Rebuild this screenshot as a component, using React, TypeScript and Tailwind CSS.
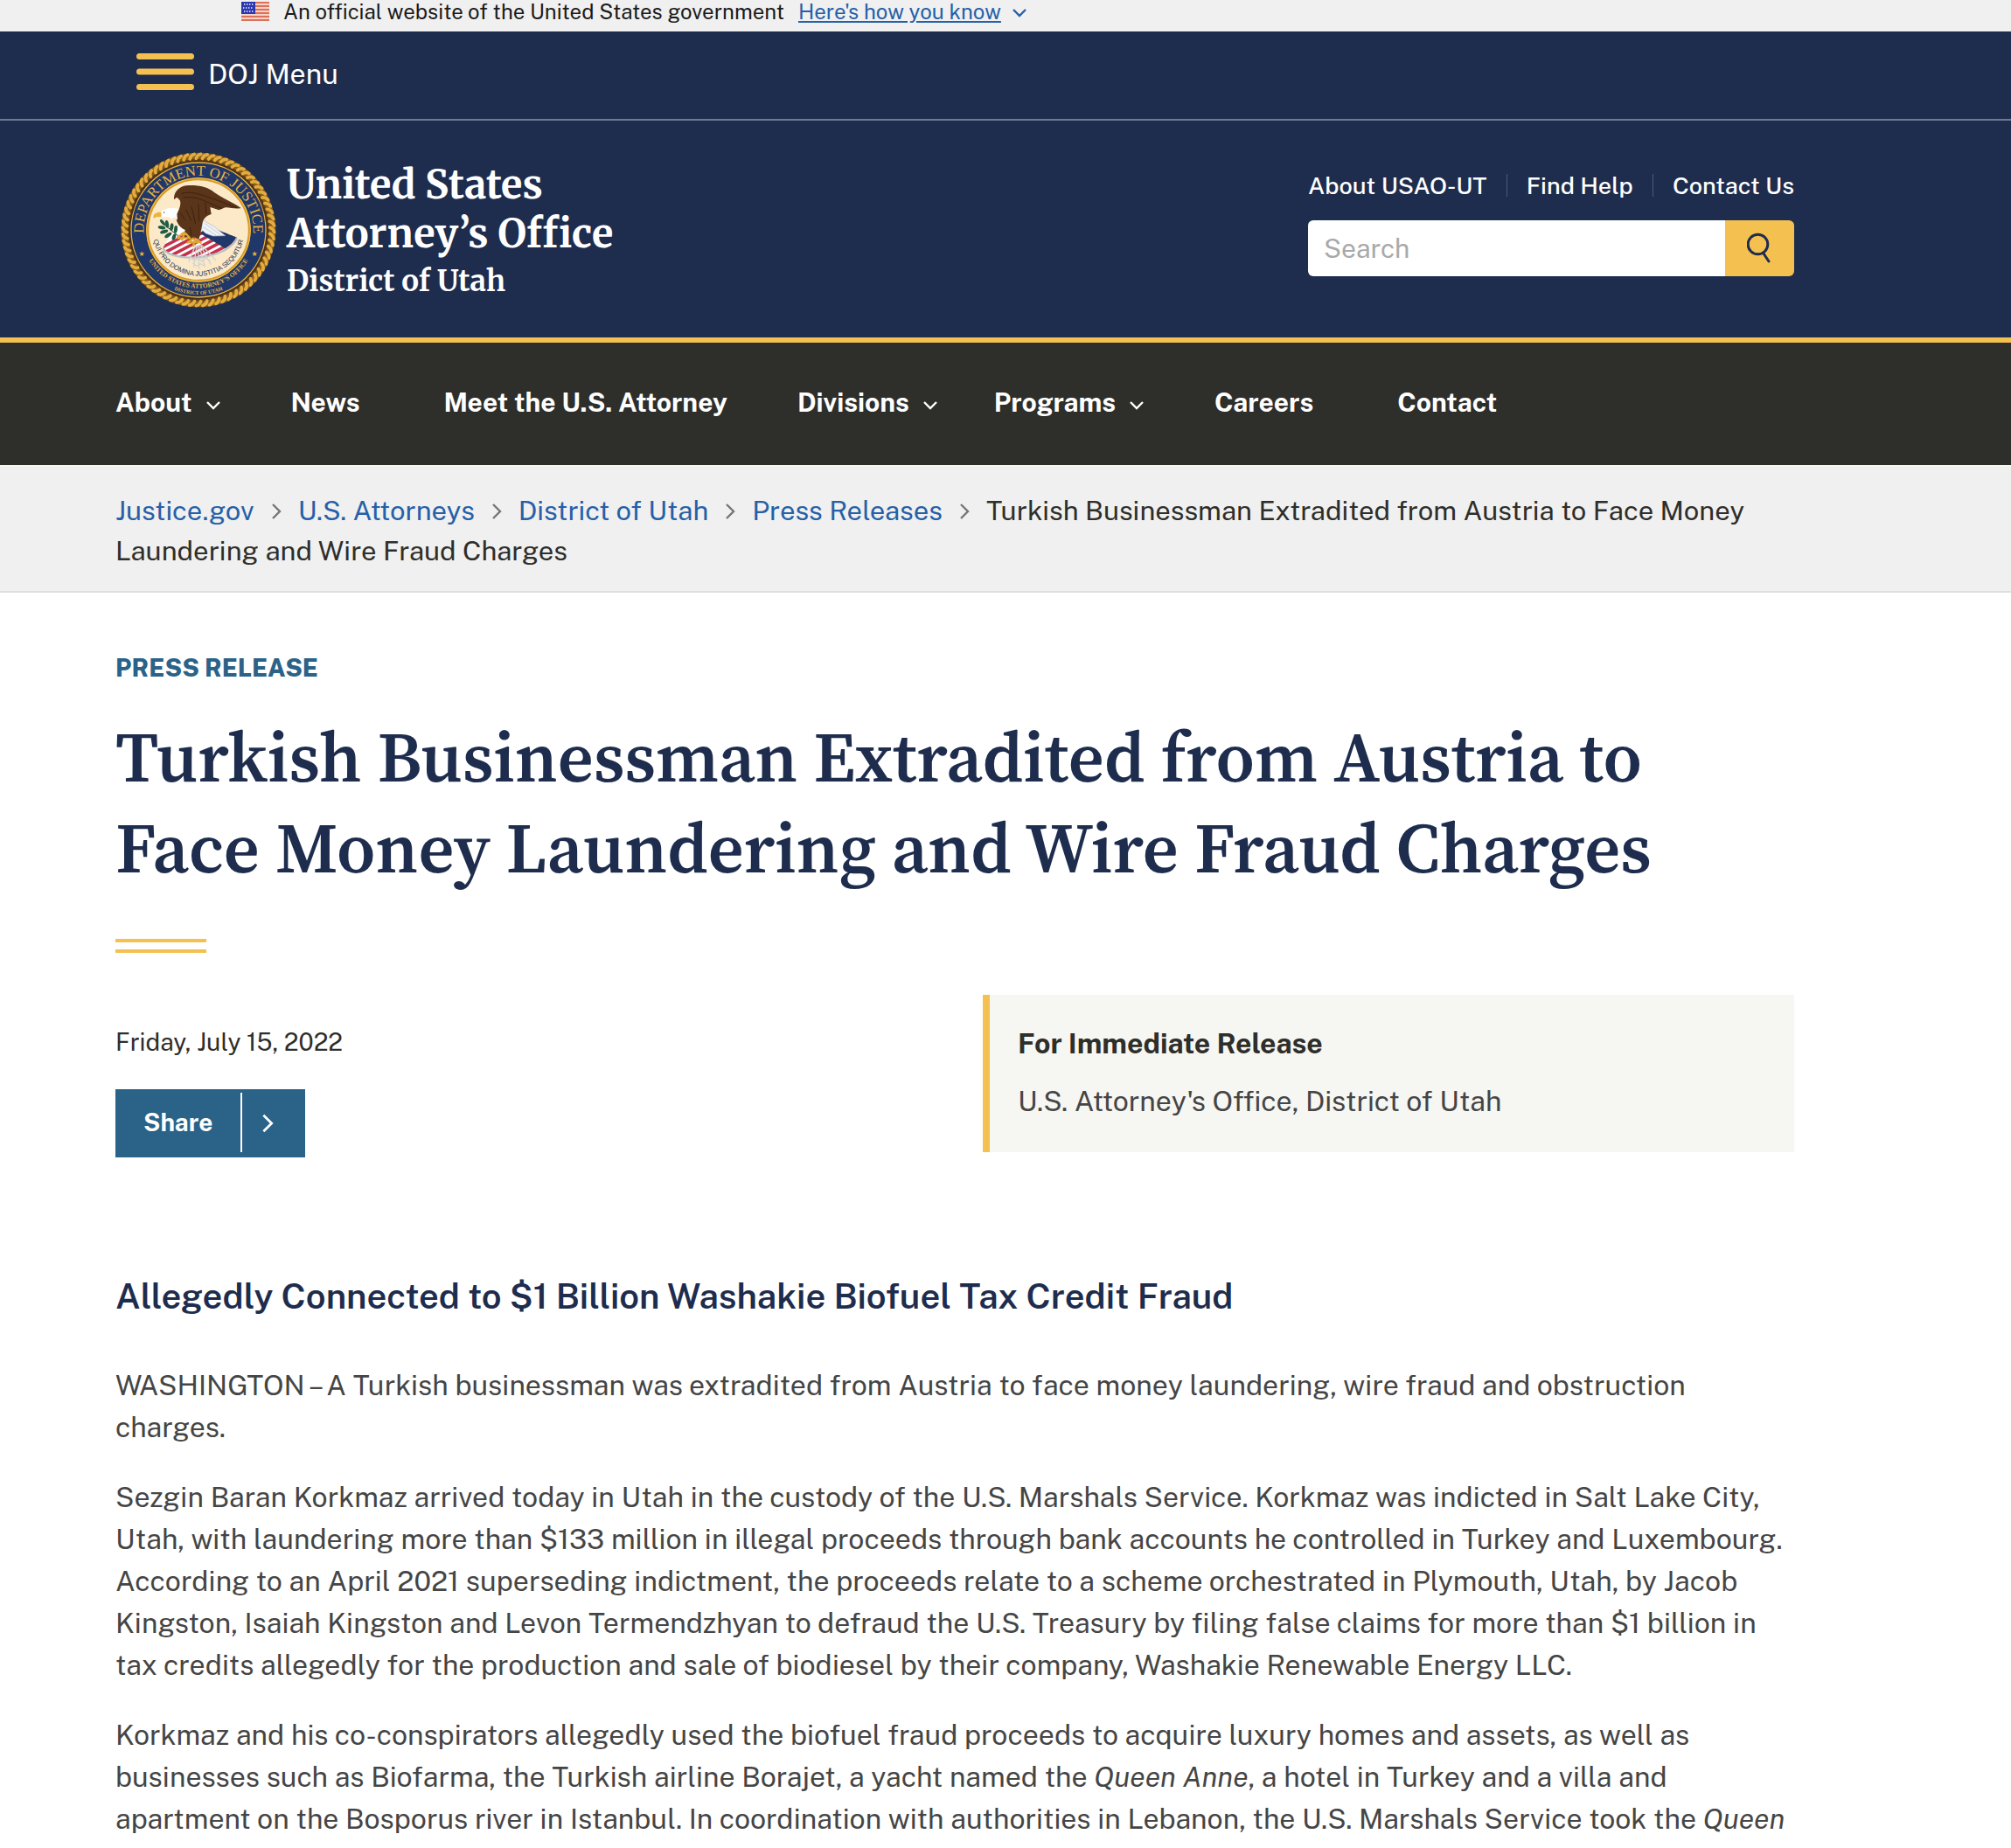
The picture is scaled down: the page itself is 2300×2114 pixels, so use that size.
import { useState } from "react";

type NavItem = { label: string; menu?: boolean };

const NAV: NavItem[] = [
  { label: "About", menu: true },
  { label: "News" },
  { label: "Meet the U.S. Attorney" },
  { label: "Divisions", menu: true },
  { label: "Programs", menu: true },
  { label: "Careers" },
  { label: "Contact" },
];

const CRUMBS = ["Justice.gov", "U.S. Attorneys", "District of Utah", "Press Releases"];

const TITLE = "Turkish Businessman Extradited from Austria to Face Money Laundering and Wire Fraud Charges";

function Flag() {
  return (
    <svg viewBox="0 0 32 22" className="h-[22px] w-8 shrink-0" aria-hidden="true">
      <rect width="32" height="22" fill="#f6d3c8" />
      {[0, 4, 8, 12, 16, 20].map((y) => (
        <rect key={y} y={y} width="32" height="2" fill="#dd7058" />
      ))}
      <rect width="16" height="14" fill="#2a37b0" />
      {[3, 7, 11].map((y, r) =>
        [3, 6, 9, 12].map((x) => (
          <rect key={`${x}-${y}`} x={r === 1 ? x - 1 : x} y={y - 1} width="1.4" height="2" fill="#c3c8ee" />
        ))
      )}
    </svg>
  );
}

function ChevronDown({ className }: { className?: string }) {
  return (
    <svg viewBox="0 0 18 12" className={className} fill="none" stroke="currentColor" strokeWidth="2.4" aria-hidden="true">
      <path d="M2 2l7 7 7-7" />
    </svg>
  );
}

function ChevronRight({ className }: { className?: string }) {
  return (
    <svg viewBox="0 0 12 20" className={className} fill="none" stroke="currentColor" strokeWidth="2.4" aria-hidden="true">
      <path d="M2 2l8 8-8 8" />
    </svg>
  );
}

function Seal() {
  return (
    <svg viewBox="50 40 540 540" className="size-[180px] shrink-0" role="img" aria-label="Department of Justice seal">
      <defs>
        <path id="arc-top" d="M138 359A188 188 0 1 1 502 359" />
        <path id="arc-office" d="M120 310A200 200 0 0 0 520 310" />
        <path id="arc-district" d="M98 310A222 222 0 0 0 542 310" />
        <path id="arc-motto" d="M164 285A158 158 0 1 0 476 285" />
        <clipPath id="shield">
          <path d="M198 372C215 340 240 302 268 290L350 296 452 336C438 368 396 394 330 402 280 406 216 400 198 372Z" />
        </clipPath>
      </defs>
      <circle cx="320" cy="310" r="258" fill="#5d3d1c" />
      <circle cx="320" cy="310" r="254" fill="none" stroke="#8a5d1c" strokeWidth="22" />
      {/* rope edge */}
      {Array.from({ length: 72 }, (_, i) => (
        <path
          key={i}
          d="M312 65C314 57 320 52 328 50"
          transform={`rotate(${i * 5} 320 310)`}
          fill="none"
          stroke="#e3ac3e"
          strokeWidth="11"
          strokeLinecap="round"
        />
      ))}
      <circle cx="320" cy="310" r="238" fill="#4a3118" />
      <circle cx="320" cy="310" r="231" fill="#20376a" stroke="#e9b440" strokeWidth="4" />
      <circle cx="320" cy="310" r="175" fill="#fbe9c8" stroke="#d99a26" strokeWidth="9" />
      <circle cx="320" cy="310" r="178" fill="none" stroke="#f2c14e" strokeWidth="3" />

      <g clipPath="url(#shield)">
        <rect x="180" y="280" width="290" height="140" fill="#fff" />
        {[0, 1, 2, 3, 4, 5, 6, 7].map((i) => (
          <path key={i} d={`M${100 + i * 42} 420l210-110`} stroke="#c4314b" strokeWidth="11" />
        ))}
        <path d="M326 322L368 288 460 336 412 374Z" fill="#20376a" />
      </g>
      <path d="M198 374C216 402 280 408 330 403 396 395 438 368 452 338" fill="none" stroke="#b9bfc6" strokeWidth="7" />

      <path d="M329 308L336 276 352 286 376 300 412 330 370 331 345 322Z" fill="#eef1f5" stroke="#aeb7c4" strokeWidth="2" />
      <path d="M342 288L395 326M336 300L380 328" stroke="#b8c0cc" strokeWidth="2" />

      <path
        d="M236 206C234 176 258 156 290 157 330 157 354 165 374 181 402 202 440 216 466 235 446 240 428 232 412 233L390 242 372 236 360 232 364 256C346 262 334 272 332 296L326 326 320 346 304 332 290 346 270 334 274 310C256 302 244 286 242 262 254 242 262 222 256 208L246 198Z"
        fill="#5a351a"
      />
      <path
        d="M262 186C300 172 350 196 452 234M268 200C310 190 340 212 400 236M258 252l16 24M276 240l20 40M296 230l14 60M320 220l2 60M344 216l2 40M290 300l6 30"
        fill="none"
        stroke="#3d2210"
        strokeWidth="3"
      />
      <path d="M188 250C200 236 226 231 252 238L246 254 248 276 236 266 228 274 218 266C206 268 196 266 189 264Z" fill="#fff" />
      <path d="M192 249C176 248 160 256 167 271 174 263 184 266 193 264Z" fill="#e9b440" />
      <circle cx="202" cy="250" r="2" fill="#333" />

      {/* olive branch */}
      <path d="M190 282L250 330" stroke="#123f2e" strokeWidth="3" />
      <g fill="#1f5c45">
        <ellipse cx="197" cy="284" rx="12" ry="5" transform="rotate(50 197 284)" />
        <ellipse cx="212" cy="290" rx="13" ry="6" transform="rotate(80 212 290)" />
        <ellipse cx="194" cy="302" rx="13" ry="6" transform="rotate(10 194 302)" />
        <ellipse cx="228" cy="300" rx="13" ry="6" transform="rotate(100 228 300)" />
        <ellipse cx="202" cy="316" rx="14" ry="6" transform="rotate(-15 202 316)" />
        <ellipse cx="242" cy="308" rx="13" ry="6" transform="rotate(95 242 308)" />
        <ellipse cx="216" cy="328" rx="14" ry="6" transform="rotate(-35 216 328)" />
        <ellipse cx="236" cy="334" rx="12" ry="6" transform="rotate(-70 236 334)" />
      </g>

      <path d="M268 320l-20 16M272 322l-8 22M276 322l14 16M250 338h36M300 340l-18 14M308 342l-6 22M314 342l14 12M284 352h42" fill="none" stroke="#dfa733" strokeWidth="7" strokeLinecap="round" />

      <path
        d="M310 362L286 420M314 362L304 438M318 362L322 444M322 362L342 436M326 362L362 428M330 362L380 414M292 404l14 12 12-10 14 12 14-12 14 10M300 424l14 10 14-8 16 10"
        fill="none"
        stroke="#d5d4d0"
        strokeWidth="4"
      />

      <g className="font-['Liberation_Serif']" textAnchor="middle">
        <text fontSize="50" fill="#e9b440">
          <textPath href="#arc-top" startOffset="50%">DEPARTMENT OF JUSTICE</textPath>
        </text>
        <text fontSize="22" fontWeight="700" fill="#e9b440">
          <textPath href="#arc-office" startOffset="50%">UNITED STATES ATTORNEY’S OFFICE</textPath>
        </text>
        <text fontSize="18" fontWeight="700" fill="#e9b440">
          <textPath href="#arc-district" startOffset="50%">DISTRICT OF UTAH</textPath>
        </text>
        <text fontSize="23" fill="#20304f" className="font-['Liberation_Sans']">
          <textPath href="#arc-motto" startOffset="50%">QUI PRO DOMINA JUSTITIA SEQUITUR</textPath>
        </text>
        <text x="125" y="400" fontSize="24" fill="#e9b440" className="font-['DejaVu_Sans']">★</text>
        <text x="512" y="400" fontSize="24" fill="#e9b440" className="font-['DejaVu_Sans']">★</text>
      </g>
    </svg>
  );
}

export default function App() {
  const [q, setQ] = useState("");

  return (
    <div className="min-h-screen bg-white font-['Public_Sans','Inter',sans-serif] text-[32px] text-[#454545]">
      <div className="flex h-9 items-start bg-[#f0f0f0] pl-[276px] text-2xl leading-[26px] text-[#1b1b1b]">
        <div className="flex items-center">
          <Flag />
          <p className="ml-4">An official website of the United States government</p>
          <button type="button" className="ml-4 flex items-center gap-3 text-[#2560a8]">
            <span className="underline underline-offset-2">Here's how you know</span>
            <ChevronDown className="mt-1 h-3 w-[18px]" />
          </button>
        </div>
      </div>

      <header className="border-b-[6px] border-[#f4c04f] bg-[#1e2d4e] text-white">
        <div className="h-[102px] border-b-2 border-[#6f7a92] pl-[156px] pt-[25px]">
          <button type="button" className="flex items-start gap-4 leading-[48px]">
            <svg viewBox="0 0 66 42" className="h-[42px] w-[66px]" stroke="#f4c04f" strokeWidth="7" strokeLinecap="round" aria-hidden="true">
              <path d="M3.5 3.5h59M3.5 21h59M3.5 38.5h59" />
            </svg>
            <span>DOJ Menu</span>
          </button>
        </div>

        <div className="flex h-[248px] max-w-[2052px] items-start justify-between pl-[137px]">
          <a href="#home" className="flex items-start gap-[11px] pt-[35px]">
            <Seal />
            <span className="pt-2.5 font-['Merriweather','DejaVu_Serif_Condensed','DejaVu_Serif',serif] text-[45px] font-bold leading-[56px]">
              United States
              <br />
              Attorney’s Office
              <span className="block text-[33px] leading-[54px]">District of Utah</span>
            </span>
          </a>

          <div className="w-[556px] pt-[61px]">
            <ul className="flex justify-between text-[27px] font-medium leading-[26px]">
              <li><a href="#about">About USAO-UT</a></li>
              <li className="w-px bg-[#4a5a7c]" aria-hidden="true" />
              <li><a href="#help">Find Help</a></li>
              <li className="w-px bg-[#4a5a7c]" aria-hidden="true" />
              <li><a href="#contact">Contact Us</a></li>
            </ul>
            <form className="mt-[27px] flex h-16 overflow-hidden rounded-md" onSubmit={(e) => e.preventDefault()}>
              <input
                type="search"
                aria-label="Search"
                placeholder="Search"
                value={q}
                onChange={(e) => setQ(e.target.value)}
                className="min-w-0 flex-1 bg-white px-[18px] text-[30px] text-[#2e2e2a] placeholder:text-[#a9a9a9]"
              />
              <button type="submit" aria-label="Submit search" className="flex w-[79px] items-center justify-center bg-[#f4c04f] text-[#1e2d4e]">
                <svg viewBox="0 0 30 40" className="h-10 w-[30px]" fill="none" stroke="currentColor" strokeWidth="3" strokeLinecap="round" aria-hidden="true">
                  <circle cx="12.5" cy="15.5" r="11.3" />
                  <path d="M19 26l6 9" />
                </svg>
              </button>
            </form>
          </div>
        </div>
      </header>

      <nav className="h-[142px] border-b-2 border-[#f6f6f2] bg-[#2e2e2a] pl-[100px] pt-11 text-[30px] font-bold leading-[48px] text-white" aria-label="Main">
        <ul className="flex">
          {NAV.map((item) => (
            <li key={item.label} className={item.menu ? "px-8" : "px-12"}>
              {item.menu ? (
                <button type="button" className="flex items-center gap-[15px] font-bold">
                  {item.label}
                  <ChevronDown className="mt-2 h-3 w-[18px]" />
                </button>
              ) : (
                <a href="#nav">{item.label}</a>
              )}
            </li>
          ))}
        </ul>
      </nav>

      <div className="border-b-2 border-[#dcdee0] bg-[#f0f0f0]">
        <nav className="max-w-[2052px] pb-[23px] pl-[132px] pt-[27px] text-[31px] leading-[46px] text-[#2e2e2a]" aria-label="Breadcrumb">
          {CRUMBS.map((c) => (
            <span key={c}>
              <a href="#crumb" className="text-[#2560a8]">{c}</a>
              <ChevronRight className="mx-[19px] mb-1 inline h-5 w-3 text-[#71767a]" />
            </span>
          ))}
          {TITLE}
        </nav>
      </div>

      <main className="max-w-[2052px] pl-[132px] pt-[66px]">
        <p className="text-[28px] font-extrabold uppercase leading-10 text-[#2a6288]">Press Release</p>
        <h1 className="mt-[30px] font-['Source_Serif_Pro','Source_Serif_4','Source_Serif','Liberation_Serif',serif] text-[80px] font-semibold leading-[104px] text-[#1e2d4e]">
          {TITLE}
        </h1>
        <div className="mt-[52px] h-4 w-[104px] border-y-4 border-[#f4c04f]" />

        <div className="mt-12 flex items-start justify-between">
          <div className="pt-8">
            <p className="text-[28px] leading-[44px] text-[#2e2e2a]">Friday, July 15, 2022</p>
            <button type="button" className="mt-8 flex h-[78px] bg-[#2a6288] text-[28px] font-bold text-white">
              <span className="my-1 flex h-[68px] items-center border-r-2 border-white px-8">Share</span>
              <span className="flex h-full w-[72px] items-center pl-[22px]">
                <ChevronRight className="h-6 w-[14px]" />
              </span>
            </button>
          </div>
          <aside className="h-[180px] w-[928px] border-l-8 border-[#f4c04f] bg-[#f6f6f2] pl-8 pt-8 leading-[48px]">
            <p className="font-bold text-[#2e2e2a]">For Immediate Release</p>
            <p className="mt-[18px]">U.S. Attorney's Office, District of Utah</p>
          </aside>
        </div>

        <h2 className="mt-[131px] text-[40px] font-semibold leading-[56px] text-[#1e2d4e]">
          Allegedly Connected to $1 Billion Washakie Biofuel Tax Credit Fraud
        </h2>

        <div className="mt-[50px] space-y-8 leading-[48px]">
          <p>
            WASHINGTON – A Turkish businessman was extradited from Austria to face money laundering, wire fraud and
            obstruction charges.
          </p>
          <p>
            Sezgin Baran Korkmaz arrived today in Utah in the custody of the U.S. Marshals Service. Korkmaz was indicted
            in Salt Lake City, Utah, with laundering more than $133 million in illegal proceeds through bank accounts he
            controlled in Turkey and Luxembourg. According to an April 2021 superseding indictment, the proceeds relate
            to a scheme orchestrated in Plymouth, Utah, by Jacob Kingston, Isaiah Kingston and Levon Termendzhyan to
            defraud the U.S. Treasury by filing false claims for more than $1 billion in tax credits allegedly for the
            production and sale of biodiesel by their company, Washakie Renewable Energy LLC.
          </p>
          <p>
            Korkmaz and his co-conspirators allegedly used the biofuel fraud proceeds to acquire luxury homes and
            assets, as well as businesses such as Biofarma, the Turkish airline Borajet, a yacht named the{" "}
            <em>Queen Anne</em>, a hotel in Turkey and a villa and apartment on the Bosporus river in Istanbul. In
            coordination with authorities in Lebanon, the U.S. Marshals Service took the <em>Queen</em>
          </p>
        </div>
      </main>
    </div>
  );
}
